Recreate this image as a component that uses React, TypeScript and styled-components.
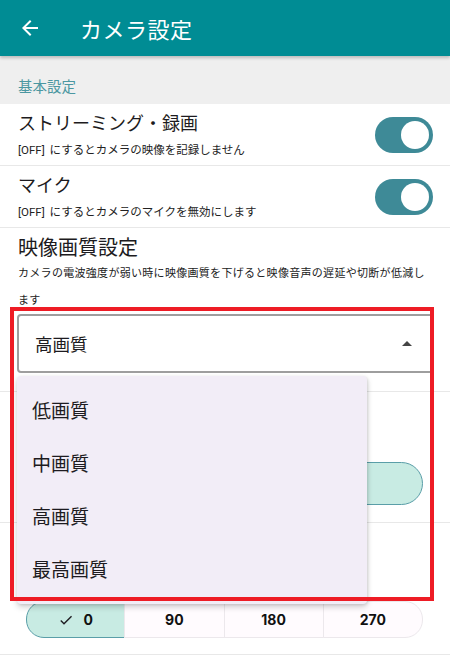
import React from 'react'
import styled, { createGlobalStyle } from 'styled-components'

const GlobalStyle = createGlobalStyle`
  html, body {
    margin: 0;
    padding: 0;
    background: #ffffff;
  }
  body {
    font-family: Roboto, "Noto Sans CJK JP", sans-serif;
    color: #1d1b20;
  }
  * { box-sizing: border-box; }
`

const Screen = styled.div`
  width: 450px;
  height: 661px;
  overflow: hidden;
  background: #ffffff;
  display: flex;
  flex-direction: column;
`

const AppBar = styled.header`
  height: 56px;
  flex-shrink: 0;
  background: #008c94;
  display: flex;
  align-items: center;
  padding-left: 18px;
  gap: 38px;
  box-shadow: 0 2px 3px rgba(0, 0, 0, 0.22);
  position: relative;
  z-index: 2;
`

const AppTitle = styled.h1`
  margin: 0;
  font-size: 22px;
  font-weight: 400;
  color: #ffffff;
  letter-spacing: 0.5px;
`

const SectionLabel = styled.div`
  height: 48px;
  flex-shrink: 0;
  background: #efefef;
  padding: 0 18px;
  display: flex;
  align-items: center;
  padding-top: 11px;
  font-size: 14.5px;
  color: #4b97a1;
`

const Row = styled.div<{ $height?: number }>`
  padding: 8px 17px 7px 18px;
  border-bottom: 1px solid #e8e8e8;
  background: #ffffff;
  ${(p) => (p.$height ? `height: ${p.$height}px;` : '')}
  flex-shrink: 0;
`

const SwitchRow = styled(Row)`
  display: flex;
  align-items: center;
  justify-content: space-between;
`

const Texts = styled.div`
  display: flex;
  flex-direction: column;
`

const Title = styled.div<{ $size?: number }>`
  font-size: ${(p) => p.$size ?? 18}px;
  line-height: 24px;
  color: #1d1b20;
`

const Sub = styled.div`
  margin-top: 6px;
  font-size: 11.5px;
  line-height: 16px;
  color: #222;
  word-spacing: 2px;
`

const Desc = styled.div`
  font-size: 11px;
  line-height: 27px;
  letter-spacing: 0.3px;
  white-space: nowrap;
  color: #222;
`

const Track = styled.div<{ $on: boolean }>`
  width: 58px;
  height: 36px;
  border-radius: 18px;
  background: ${(p) => (p.$on ? '#3e8a97' : '#cccccc')};
  display: flex;
  align-items: center;
  justify-content: ${(p) => (p.$on ? 'flex-end' : 'flex-start')};
  padding: 0 4px;
`

const Knob = styled.div`
  width: 28px;
  height: 28px;
  border-radius: 50%;
  background: #ffffff;
`

const SelectWrap = styled.div`
  position: relative;
  margin-right: -1px;
  margin-left: -1px;
`

const SelectBox = styled.div`
  height: 59px;
  border: 2px solid #9e9e9e;
  border-radius: 4px;
  display: flex;
  align-items: center;
  justify-content: space-between;
  padding: 0 13px 0 16px;
  font-size: 17.5px;
  color: #1d1b20;
`

const Menu = styled.ul`
  position: absolute;
  top: 62px;
  left: 0;
  width: 350px;
  margin: 0;
  padding: 8px 0;
  list-style: none;
  background: #f2edf7;
  border-radius: 4px;
  box-shadow: 0 3px 6px rgba(0, 0, 0, 0.18), 1px 1px 3px rgba(0, 0, 0, 0.1);
  z-index: 3;
`

const MenuItem = styled.li`
  height: 53px;
  display: flex;
  align-items: center;
  padding-left: 15px;
  padding-bottom: 2px;
  font-size: 19px;
  color: #1d1b20;
`

const Highlight = styled.div`
  position: absolute;
  top: -7px;
  left: -7px;
  right: 0;
  height: 294px;
  border: 4px solid #ee1c25;
  pointer-events: none;
  z-index: 4;
`

const ControlRow = styled(Row)`
  display: flex;
  flex-direction: column;
  justify-content: flex-end;
  padding-left: 26px;
  padding-right: 27px;
`

const PillButton = styled.div`
  height: 43px;
  border-radius: 22px;
  border: 1.5px solid #5a9ea8;
  background: #c8ebe3;
  margin-bottom: 10px;
`

const Segments = styled.div`
  margin-bottom: 9px;
  display: grid;
  grid-template-columns: repeat(4, 1fr);
  height: 37px;
`

const Segment = styled.div<{ $active?: boolean }>`
  display: flex;
  align-items: center;
  justify-content: center;
  gap: 9px;
  font-family: Inter, "Noto Sans", sans-serif;
  font-weight: 700;
  font-size: 14px;
  color: #111;
  background: ${(p) => (p.$active ? '#c8ebe3' : '#fffbfe')};
  border: 1px solid ${(p) => (p.$active ? '#5a9ea8' : '#ece8ec')};
  margin-left: -1px;
  &:first-child {
    margin-left: 0;
    border-radius: 18px 0 0 18px;
  }
  &:last-child {
    border-radius: 0 18px 18px 0;
  }
`

const Rest = styled.div`
  flex: 1;
  background: #ffffff;
`

const qualities = ['低画質', '中画質', '高画質', '最高画質']
const angles = ['0', '90', '180', '270']

const App = () => {
  return (
    <>
      <GlobalStyle />
      <Screen>
        <AppBar>
          <svg width="24" height="24" viewBox="0 0 24 24" fill="#ffffff">
            <path d="M20 11H7.83l5.59-5.59L12 4l-8 8 8 8 1.41-1.41L7.83 13H20v-2z" />
          </svg>
          <AppTitle>カメラ設定</AppTitle>
        </AppBar>
        <SectionLabel>基本設定</SectionLabel>
        <SwitchRow>
          <Texts>
            <Title>ストリーミング・録画</Title>
            <Sub>[OFF] にするとカメラの映像を記録しません</Sub>
          </Texts>
          <Track $on><Knob /></Track>
        </SwitchRow>
        <SwitchRow>
          <Texts>
            <Title>マイク</Title>
            <Sub>[OFF] にするとカメラのマイクを無効にします</Sub>
          </Texts>
          <Track $on><Knob /></Track>
        </SwitchRow>
        <Row style={{ paddingBottom: 18 }}>
          <Title $size={20}>映像画質設定</Title>
          <Desc>
            カメラの電波強度が弱い時に映像画質を下げると映像音声の遅延や切断が低減し
            <br />
            ます
          </Desc>
          <SelectWrap>
            <SelectBox>
              <span>高画質</span>
              <svg width="24" height="24" viewBox="0 0 24 24" fill="#444">
                <path d="M7 14l5-5 5 5z" />
              </svg>
            </SelectBox>
            <Menu>
              {qualities.map((q) => (
                <MenuItem key={q}>{q}</MenuItem>
              ))}
            </Menu>
            <Highlight />
          </SelectWrap>
        </Row>
        <ControlRow $height={131}>
          <PillButton />
        </ControlRow>
        <ControlRow $height={132}>
          <Segments>
            {angles.map((a, i) => (
              <Segment key={a} $active={i === 0}>
                {i === 0 && (
                  <svg width="16" height="16" viewBox="0 0 24 24" fill="#1d1b20">
                    <path d="M9 16.17 4.83 12l-1.42 1.41L9 19 21 7l-1.41-1.41z" />
                  </svg>
                )}
                {a}
              </Segment>
            ))}
          </Segments>
        </ControlRow>
        <Rest />
      </Screen>
    </>
  )
}

export default App
